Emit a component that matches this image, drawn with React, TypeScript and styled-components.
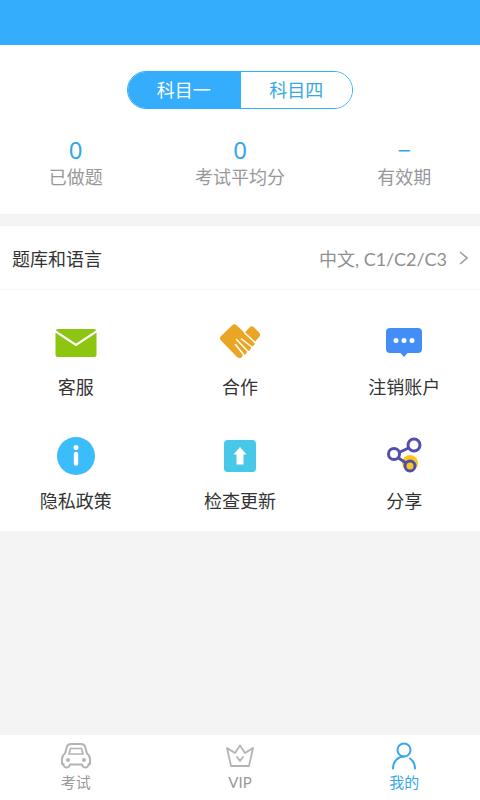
import React, { useState } from "react";
import styled, { createGlobalStyle } from "styled-components";

const GlobalStyle = createGlobalStyle`
  * { box-sizing: border-box; }
  body {
    margin: 0;
    background: #f4f4f4;
    font-family: Lato, "Noto Sans CJK SC", sans-serif;
  }
  button { font: inherit; border: 0; padding: 0; background: none; cursor: pointer; }
`;

const Page = styled.div`
  min-height: 100vh;
  display: flex;
  flex-direction: column;
`;

const StatusBar = styled.header`
  height: 45px;
  background: #34aefc;
`;

const Summary = styled.section`
  background: #fff;
  padding: 26px 0 24px;
  margin-bottom: 12px;
`;

const Segments = styled.div`
  display: flex;
  width: 226px;
  height: 38px;
  margin: 0 auto 26px;
  border: 1px solid #34aefc;
  border-radius: 19px;
  overflow: hidden;
`;

const Segment = styled.button<{ $active: boolean }>`
  flex: 1;
  font-size: 18px;
  line-height: 36px;
  color: ${(p) => (p.$active ? "#fff" : "#35a8e4")};
  background: ${(p) => (p.$active ? "#34aefc" : "#fff")};
  & + & { border-left: 1px solid #34aefc; }
`;

const Columns = styled.div`
  display: grid;
  grid-template-columns: repeat(3, 1fr);
  column-gap: 13px;
`;

const Stat = styled.div`
  display: flex;
  flex-direction: column;
  align-items: center;
`;

const StatValue = styled.span`
  font-family: "Noto Sans", sans-serif;
  font-size: 24px;
  line-height: 29px;
  color: #32a7e8;
`;

const StatLabel = styled.span`
  font-size: 18px;
  line-height: 26px;
  color: #989898;
`;

const SettingRow = styled.button`
  display: flex;
  align-items: center;
  width: 100%;
  height: 64px;
  padding: 0 12px;
  background: #fff;
  border-bottom: 1px solid #f7f7f7;
  font-size: 18px;
`;

const SettingName = styled.span`
  flex: 1;
  text-align: left;
  color: #333;
`;

const SettingValue = styled.span`
  margin-right: 12px;
  color: #8f8f8f;
`;

const Menu = styled(Columns)`
  background: #fff;
  padding-top: 30px;
  row-gap: 17px;
`;

const MenuItem = styled.button`
  display: flex;
  flex-direction: column;
  align-items: center;
  height: 97px;
  gap: 8px;
  font-size: 18px;
  line-height: 26px;
  color: #333;
`;

const TabBar = styled.nav`
  display: grid;
  grid-template-columns: repeat(3, 1fr);
  column-gap: 13px;
  height: 65px;
  margin-top: auto;
  background: #fff;
`;

const Tab = styled.button<{ $active: boolean }>`
  display: flex;
  flex-direction: column;
  align-items: center;
  padding-top: 5px;
  font-size: 15px;
  line-height: 20px;
  color: ${(p) => (p.$active ? "#35a8e8" : "#999")};
  svg { color: ${(p) => (p.$active ? "#35a8e8" : "#b4b4b4")}; }
`;

const MenuSvg = ({ children }: { children: React.ReactNode }) => (
  <svg width="44" height="46" viewBox="0 0 44 46" aria-hidden="true">{children}</svg>
);

const MailIcon = () => (
  <MenuSvg>
    <rect x="1.500" y="9" width="41" height="28" rx="2.500" fill="#8cc611" />
    <path d="M0 10.500 22 25 44 10.500" fill="none" stroke="#fff" strokeWidth="2.200" />
  </MenuSvg>
);

const HandshakeIcon = () => (
  <MenuSvg>
    <path
      d="M14.500 5Q16.300 3.500 18.300 5L26.500 12.800 32 7Q33.800 5.500 35.700 7L41.300 12.800Q43 14.800 41.300 16.800L36.500 22.300Q37.300 24.500 35.500 25.800 34 26.800 33 26.300 33.500 28.500 32 30 30.500 31.300 28.800 30.800 29.300 32.500 27.800 34 26.300 35.300 24.800 34.800 25 36 23.500 37.400 21.300 39 19 37L2.800 20.300Q1 18.300 2.800 16.300Z"
      fill="#e9a523"
    />
    <path
      d="M17.500 24.500 25.500 34.500M18.500 19.500 29.500 31M23.500 19 33.800 27M26.500 12.800 37 22.500"
      fill="none"
      stroke="#fff"
      strokeWidth="1.500"
      strokeLinecap="round"
    />
  </MenuSvg>
);

const MessageIcon = () => (
  <MenuSvg>
    <path d="M8 8H36Q40 8 40 12V29Q40 33 36 33H25.500L22 37 18.500 33H8Q4 33 4 29V12Q4 8 8 8Z" fill="#438df7" />
    <g fill="#fff">
      <circle cx="14" cy="20.500" r="2.500" />
      <circle cx="22" cy="20.500" r="2.500" />
      <circle cx="30" cy="20.500" r="2.500" />
    </g>
  </MenuSvg>
);

const InfoIcon = () => (
  <MenuSvg>
    <circle cx="22" cy="22" r="19" fill="#3bbcfb" />
    <circle cx="22" cy="13.500" r="2.500" fill="#fff" />
    <path d="M22 20V29.500" stroke="#fff" strokeWidth="4.400" strokeLinecap="round" />
  </MenuSvg>
);

const UpdateIcon = () => (
  <MenuSvg>
    <rect x="6" y="6" width="32" height="32" rx="3.500" fill="#48c8e8" />
    <path d="M22 13 28.500 20.500H25.500V30.500H18.500V20.500H15.500Z" fill="#fff" />
  </MenuSvg>
);

const ShareIcon = () => (
  <MenuSvg>
    <circle cx="28" cy="29" r="8" fill="#f8c719" />
    <g fill="none" stroke="#514eae" strokeWidth="3">
      <path d="M17 18.500 26.500 14M16.500 24 24 29" />
      <circle cx="12" cy="20" r="5.500" fill="#fff" />
      <circle cx="32" cy="11" r="6" fill="#fff" />
      <circle cx="28" cy="32" r="5" />
    </g>
  </MenuSvg>
);

const TabSvg = ({ children }: { children: React.ReactNode }) => (
  <svg width="32" height="32" viewBox="0 0 32 32" fill="none" stroke="currentColor" strokeWidth="2" strokeLinejoin="round" strokeLinecap="round" aria-hidden="true">
    {children}
  </svg>
);

const CarIcon = () => (
  <TabSvg>
    <path d="M5 13.500 7 6.500Q8 4 11 4H21Q24 4 25 6.500L27 13.500Q30 15.500 30 19V24H28.500V25.500Q26 29 23 26.500L22 24.500H10L9 26.500Q6 29 3.500 25.500V24H2V19Q2 15.500 5 13.500Z" />
    <path d="M10.500 8.500H21.500L23 14H9Z" strokeWidth="1.700" />
    <circle cx="8" cy="20" r="2" fill="currentColor" stroke="none" />
    <circle cx="24" cy="20" r="2" fill="currentColor" stroke="none" />
  </TabSvg>
);

const CrownIcon = () => (
  <TabSvg>
    <path d="M3 8 7 26H25L29 8 21 13 16 5.500 11 13Z" strokeWidth="1.800" />
    <path d="M13 17 16 21 19 17" strokeWidth="1.800" />
  </TabSvg>
);

const UserIcon = () => (
  <TabSvg>
    <circle cx="16" cy="10" r="6.500" />
    <path d="M5 28.500C5 21.500 10 16.500 16 16.500M22 18.500Q27 22 27 28.500" />
  </TabSvg>
);

const stats = [
  { value: "0", label: "已做题" },
  { value: "0", label: "考试平均分" },
  { value: "−", label: "有效期" },
];

const menu = [
  { label: "客服", Icon: MailIcon },
  { label: "合作", Icon: HandshakeIcon },
  { label: "注销账户", Icon: MessageIcon },
  { label: "隐私政策", Icon: InfoIcon },
  { label: "检查更新", Icon: UpdateIcon },
  { label: "分享", Icon: ShareIcon },
];

const tabs = [
  { label: "考试", Icon: CarIcon },
  { label: "VIP", Icon: CrownIcon },
  { label: "我的", Icon: UserIcon },
];

export default function App() {
  const [subject, setSubject] = useState("科目一");
  const [tab, setTab] = useState("我的");
  return (
    <Page lang="zh-CN">
      <GlobalStyle />
      <StatusBar />
      <Summary>
        <Segments>
          {["科目一", "科目四"].map((name) => (
            <Segment key={name} $active={name === subject} aria-pressed={name === subject} onClick={() => setSubject(name)}>
              {name}
            </Segment>
          ))}
        </Segments>
        <Columns>
          {stats.map((s) => (
            <Stat key={s.label}>
              <StatValue>{s.value}</StatValue>
              <StatLabel>{s.label}</StatLabel>
            </Stat>
          ))}
        </Columns>
      </Summary>
      <SettingRow>
        <SettingName>题库和语言</SettingName>
        <SettingValue>中文, C1/C2/C3</SettingValue>
        <svg width="9" height="14" viewBox="0 0 9 14" fill="none" stroke="#999" strokeWidth="1.500" aria-hidden="true">
          <path d="M1 1 8 7 1 13" />
        </svg>
      </SettingRow>
      <Menu>
        {menu.map(({ label, Icon }) => (
          <MenuItem key={label}>
            <Icon />
            {label}
          </MenuItem>
        ))}
      </Menu>
      <TabBar>
        {tabs.map(({ label, Icon }) => (
          <Tab key={label} $active={label === tab} onClick={() => setTab(label)}>
            <Icon />
            {label}
          </Tab>
        ))}
      </TabBar>
    </Page>
  );
}
